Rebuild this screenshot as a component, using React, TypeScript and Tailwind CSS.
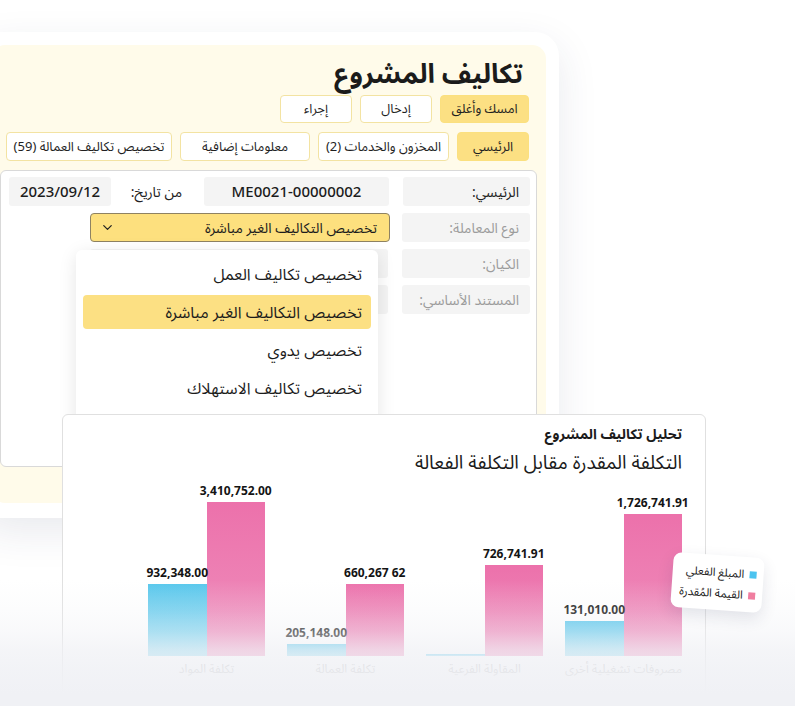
import React from "react";
import { ChevronDown } from "lucide-react";

const FONT = "font-['Noto_Sans','Noto_Sans_Arabic','Noto_Sans_Arabic_UI','DejaVu_Sans',sans-serif]";

function Btn({ children, w, active }: { children: React.ReactNode; w: string; active?: boolean }) {
  return (
    <div
      className={`${w} flex items-center justify-center rounded-[4px] border text-[13px] text-[#1f1f1f] ${
        active ? "border-[#fbe07f] bg-[#fce083]" : "border-[#f3e3a2] bg-white"
      }`}
    >
      {children}
    </div>
  );
}

type Bar = { h: number; label?: string };
type Group = { name: string; pink: Bar; blue: Bar };

const groups: Group[] = [
  { name: "مصروفات تشغيلية أخرى", pink: { h: 142, label: "1,726,741.91" }, blue: { h: 35, label: "131,010.00" } },
  { name: "المقاولة الفرعية", pink: { h: 91, label: "726,741.91" }, blue: { h: 2 } },
  { name: "تكلفة العمالة", pink: { h: 72, label: "660,267 62" }, blue: { h: 12, label: "205,148.00" } },
  { name: "تكلفة المواد", pink: { h: 154, label: "3,410,752.00" }, blue: { h: 72, label: "932,348.00" } },
];

function BarCol({ bar, color }: { bar: Bar; color: "pink" | "blue" }) {
  return (
    <div className="flex w-1/2 flex-col items-center justify-end">
      {bar.label && (
        <div dir="ltr" className="mb-[4px] whitespace-nowrap text-[12px] font-bold leading-[14px] text-[#141414]">
          {bar.label}
        </div>
      )}
      <div
        className={`w-full ${
          color === "pink"
            ? "bg-linear-to-b from-[#ec71ab] to-[#ef8fbd]"
            : "bg-linear-to-b from-[#57c7ec] to-[#8ad9f1]"
        }`}
        style={{ height: bar.h }}
      />
    </div>
  );
}

export default function App() {
  return (
    <div className={`relative h-[706px] w-[795px] overflow-hidden bg-white ${FONT}`}>
      {/* Main form card */}
      <div className="ml-[-22px] mt-[32px] w-[581px] rounded-[24px] bg-white p-[13px] pb-[15px] shadow-[0_14px_40px_rgba(40,50,90,0.10)]">
        <div dir="rtl" className="rounded-[14px] bg-[#fffbea] px-[9px] pb-[36px] pt-[10px]">
          <div className="pr-[8px]">
            <h1 className="pr-[6px] text-[27px] font-bold leading-[36px] text-[#1b1b1b]">تكاليف المشروع</h1>
            <div className="mt-[4px] flex h-[28px] gap-[8px]">
              <Btn w="w-[89px]" active>
                امسك وأغلق
              </Btn>
              <Btn w="w-[72px]">إدخال</Btn>
              <Btn w="w-[72px]">إجراء</Btn>
            </div>
            <div className="mt-[9px] flex h-[29px] gap-[8px]">
              <Btn w="w-[72px]" active>
                الرئيسي
              </Btn>
              <Btn w="w-[131px]">المخزون والخدمات (2)</Btn>
              <Btn w="w-[130px]">معلومات إضافية</Btn>
              <Btn w="w-[166px]">تخصيص تكاليف العمالة (59)</Btn>
            </div>
          </div>

          <div className="relative mt-[9px] h-[297px] rounded-[6px] border border-[#d9d9d9] bg-white pl-[8px] pr-[6px] pt-[6px]">
            <div className="flex flex-col gap-[7px]">
              <div className="flex h-[29px] gap-[14px]">
                <div className="flex w-[128px] items-center rounded-[3px] bg-[#f4f4f4] pr-[11px] text-[14px] text-[#222]">
                  الرئيسي:
                </div>
                <div className="flex items-center gap-[22px]">
                  <div className="flex h-[29px] w-[185px] items-center justify-center rounded-[3px] bg-[#f4f4f4] text-[15px] font-medium text-[#1c1c1c]">
                    ME0021-00000002
                  </div>
                  <div className="w-[49px] whitespace-nowrap text-[14px] text-[#222]">من تاريخ:</div>
                  <div className="flex h-[29px] w-[102px] items-center justify-center rounded-[3px] bg-[#f4f4f4] text-[15px] font-medium text-[#1c1c1c]">
                    2023/09/12
                  </div>
                </div>
              </div>
              <div className="flex h-[29px] gap-[12px]">
                <div className="flex w-[128px] items-center rounded-[3px] bg-[#f4f4f4] pr-[11px] text-[14px] text-[#9c9c9c]">
                  نوع المعاملة:
                </div>
                <div className="flex w-[300px] items-center justify-between rounded-[4px] border border-[#8e8262] bg-[#fde07e] pl-[9px] pr-[12px] text-[14px] text-[#1c1c1c]">
                  <span>تخصيص التكاليف الغير مباشرة</span>
                  <ChevronDown size={15} strokeWidth={2} className="text-[#222]" />
                </div>
              </div>
              <div className="flex h-[29px] gap-[14px]">
                <div className="flex w-[128px] items-center rounded-[3px] bg-[#f4f4f4] pr-[11px] text-[14px] text-[#9c9c9c]">
                  الكيان:
                </div>
                <div className="w-[298px] rounded-[3px] bg-[#f4f4f4]" />
              </div>
              <div className="flex h-[29px] gap-[14px]">
                <div className="flex w-[128px] items-center rounded-[3px] bg-[#f4f4f4] pr-[11px] text-[14px] text-[#9c9c9c]">
                  المستند الأساسي:
                </div>
                <div className="w-[298px] rounded-[3px] bg-[#f4f4f4]" />
              </div>
            </div>

            {/* Dropdown menu */}
            <div className="absolute left-[75px] top-[79px] flex h-[180px] w-[302px] flex-col gap-[4px] rounded-[6px] bg-white px-[7px] pt-[7px] shadow-[0_4px_18px_rgba(0,0,0,0.10)]">
              {["تخصيص تكاليف العمل", "تخصيص التكاليف الغير مباشرة", "تخصيص يدوي", "تخصيص تكاليف الاستهلاك"].map(
                (t, i) => (
                  <div
                    key={t}
                    className={`flex h-[34px] items-center rounded-[4px] pr-[9px] text-[16px] text-[#1c1c1c] ${
                      i === 1 ? "bg-[#fce083]" : ""
                    }`}
                  >
                    {t}
                  </div>
                )
              )}
            </div>
          </div>
        </div>
      </div>

      {/* Chart card */}
      <div
        dir="rtl"
        className="absolute left-[62px] top-[414px] h-[300px] w-[644px] rounded-[6px] border border-[#e0e0e0] bg-white pr-[23px] pt-[9px]"
      >
        <div className="text-[14px] font-bold leading-[20px] text-[#1b1b1b]">تحليل تكاليف المشروع</div>
        <div className="mt-[4px] text-[19px] leading-[28px] text-[#1b1b1b]">التكلفة المقدرة مقابل التكلفة الفعالة</div>
        <div className="mt-[1px] flex h-[179px] items-end gap-[22px]">
          {groups.map((g) => (
            <div key={g.name} className="flex h-full w-[117px] items-end">
              <BarCol bar={g.pink} color="pink" />
              <BarCol bar={g.blue} color="blue" />
            </div>
          ))}
        </div>
        <div className="mt-[5px] flex gap-[22px]">
          {groups.map((g) => (
            <div key={g.name} className="w-[117px] text-center text-[12px] leading-[16px] text-[#9a9a9a]">
              {g.name}
            </div>
          ))}
        </div>
      </div>

      {/* Bottom fade */}
      <div className="pointer-events-none absolute bottom-0 left-0 right-0 h-[126px] bg-[linear-gradient(to_bottom,rgba(240,241,245,0)_0%,rgba(240,241,245,0.22)_25%,rgba(240,241,245,0.42)_41%,rgba(240,241,245,0.7)_55%,rgba(240,241,245,0.86)_70%,rgba(240,241,245,1)_90%)]" />

      {/* Legend */}
      <div
        dir="rtl"
        className="absolute left-[672px] top-[555px] flex rotate-[4deg] flex-col gap-[5px] rounded-[8px] bg-white py-[9px] pl-[8px] pr-[7px] shadow-[0_6px_16px_rgba(30,40,80,0.12)]"
      >
        <div className="flex items-center gap-[5px] whitespace-nowrap text-[11.5px] leading-[16px] text-[#222]">
          <span className="h-[7px] w-[7px] bg-[#4cc3ef]" />
          المبلغ الفعلي
        </div>
        <div className="flex items-center gap-[5px] whitespace-nowrap text-[11.5px] leading-[16px] text-[#222]">
          <span className="h-[7px] w-[7px] bg-[#f07ea0]" />
          القيمة المُقدرة
        </div>
      </div>
    </div>
  );
}
